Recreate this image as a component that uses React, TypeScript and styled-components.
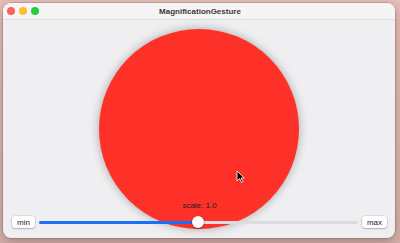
import React from 'react';
import styled, { createGlobalStyle } from 'styled-components';

const Global = createGlobalStyle`
  html, body {
    margin: 0;
    padding: 0;
    width: 400px;
    height: 243px;
    overflow: hidden;
    background: linear-gradient(180deg, #e8bcb8 0%, #d6b0ab 100%);
    font-family: "Liberation Sans", Arial, sans-serif;
  }
`;

const Window = styled.div`
  margin: 3px 0 0 3px;
  width: 392px;
  height: 235px;
  border-radius: 8px;
  background: #efeef0;
  box-shadow: 0 0 0 0.5px rgba(0, 0, 0, 0.25), 0 4px 12px rgba(0, 0, 0, 0.25);
  overflow: hidden;
  display: flex;
  flex-direction: column;
`;

const TitleBar = styled.div`
  position: relative;
  height: 16px;
  flex: 0 0 16px;
  background: #f6f5f6;
  border-bottom: 1px solid #dedddf;
  display: flex;
  align-items: center;
  justify-content: center;
`;

const Lights = styled.div`
  position: absolute;
  left: 4px;
  top: 4px;
  display: flex;
  gap: 4px;
`;

const Light = styled.span<{ $color: string }>`
  width: 8px;
  height: 8px;
  border-radius: 50%;
  background: ${(p) => p.$color};
`;

const Title = styled.div`
  font-size: 8px;
  font-weight: bold;
  color: #3a3a3a;
  margin-left: 2px;
`;

const Content = styled.div`
  position: relative;
  flex: 1;
  display: flex;
  align-items: center;
  justify-content: center;
`;

const Circle = styled.div`
  width: 200px;
  height: 200px;
  border-radius: 50%;
  background: #fe3129;
  box-shadow: 0 0 10px rgba(0, 0, 0, 0.3);
`;

const Controls = styled.div`
  position: absolute;
  left: 9px;
  right: 8px;
  bottom: 10px;
  display: flex;
  flex-direction: column;
  align-items: center;
  gap: 6px;
`;

const ScaleLabel = styled.div`
  font-size: 8px;
  color: #1e1e1e;
`;

const SliderRow = styled.div`
  width: 100%;
  display: flex;
  align-items: center;
  gap: 4px;
`;

const EndButton = styled.div`
  height: 12px;
  padding: 0 5px;
  border-radius: 3px;
  background: #ffffff;
  box-shadow: 0 0 0 0.5px rgba(0, 0, 0, 0.15), 0 1px 1.5px rgba(0, 0, 0, 0.2);
  font-size: 8px;
  color: #222;
  display: flex;
  align-items: center;
`;

const Track = styled.div`
  position: relative;
  flex: 1;
  height: 3px;
  border-radius: 2px;
  background: #dcdbdd;
`;

const Fill = styled.div`
  height: 100%;
  border-radius: 2px;
  background: #1a6ff5;
`;

const Thumb = styled.div`
  position: absolute;
  top: 50%;
  width: 12px;
  height: 12px;
  margin: -6px 0 0 -6px;
  border-radius: 50%;
  background: #fff;
  box-shadow: 0 0 0 0.5px rgba(0, 0, 0, 0.2), 0 1px 2px rgba(0, 0, 0, 0.3);
`;

const Cursor = styled.svg`
  position: absolute;
  left: 233px;
  top: 150px;
`;

export default function App() {
  const value = 0.5;
  return (
    <>
      <Global />
      <Window>
        <TitleBar>
          <Lights>
            <Light $color="#fe5f57" />
            <Light $color="#febc2e" />
            <Light $color="#28c840" />
          </Lights>
          <Title>MagnificationGesture</Title>
        </TitleBar>
        <Content>
          <Circle />
          <Controls>
            <ScaleLabel>scale: 1.0</ScaleLabel>
            <SliderRow>
              <EndButton>min</EndButton>
              <Track>
                <Fill style={{ width: `${value * 100}%` }} />
                <Thumb style={{ left: `${value * 100}%` }} />
              </Track>
              <EndButton>max</EndButton>
            </SliderRow>
          </Controls>
          <Cursor width="9" height="13" viewBox="0 0 9 13">
            <path d="M1 1 L1 11 L3.5 8.5 L5.5 12.5 L7 11.8 L5 8 L8.3 8 Z" fill="#000" stroke="#fff" strokeWidth="0.8" />
          </Cursor>
        </Content>
      </Window>
    </>
  );
}
